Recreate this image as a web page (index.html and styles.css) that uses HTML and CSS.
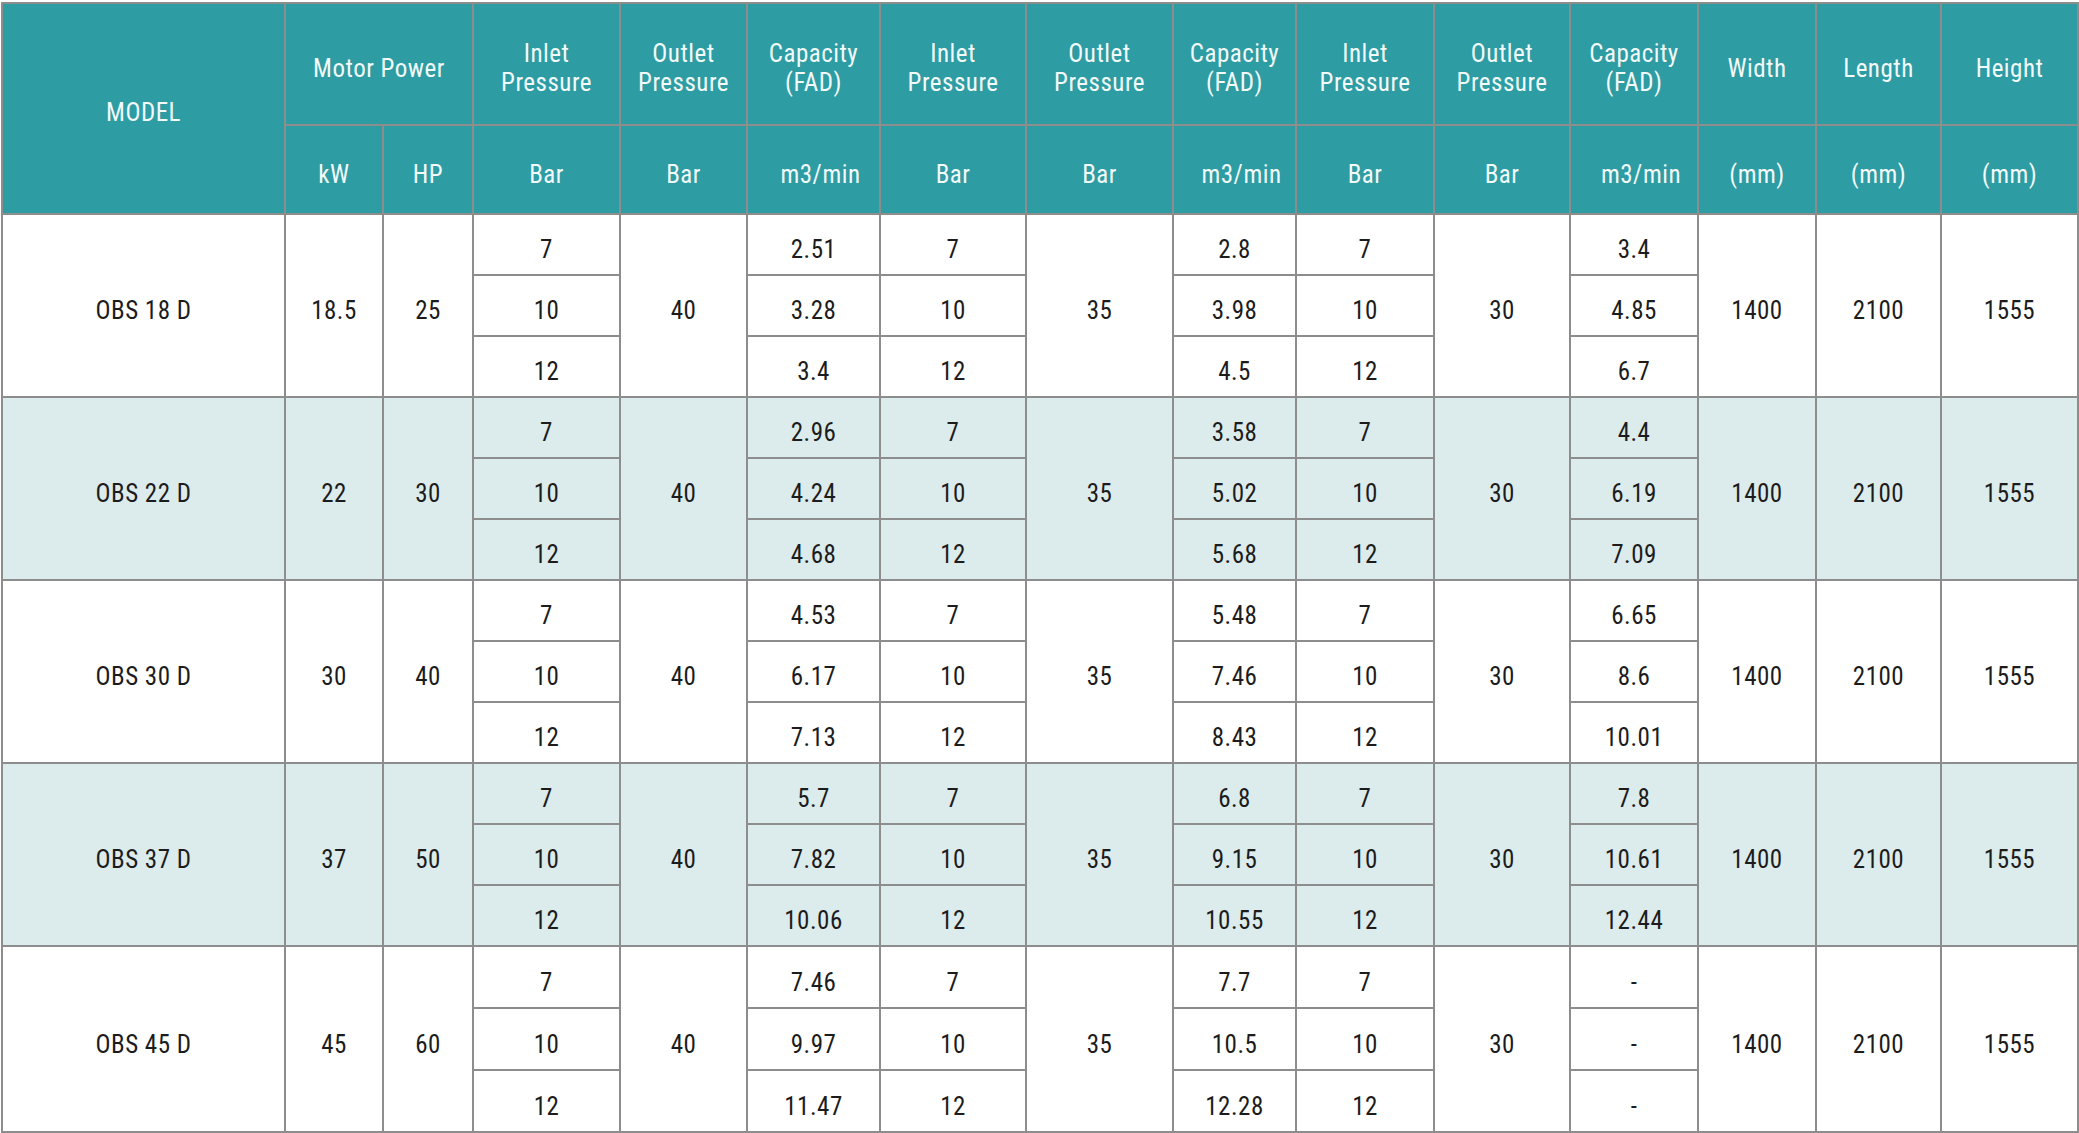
FILE: index.html
```html
<!DOCTYPE html>
<html lang="en">
<head>
<meta charset="utf-8">
<title>OBS D Series</title>
<link rel="stylesheet" href="styles.css">
</head>
<body>
<table class="spec">
  <colgroup>
    <col class="c-model"><col class="c-kw"><col class="c-hp">
    <col class="c-in1"><col class="c-out1"><col class="c-cap1">
    <col class="c-in2"><col class="c-out2"><col class="c-cap2">
    <col class="c-in3"><col class="c-out3"><col class="c-cap3">
    <col class="c-w"><col class="c-l"><col class="c-h">
  </colgroup>
  <thead>
    <tr class="h1">
      <th rowspan="2" class="model-h">MODEL</th>
      <th colspan="2">Motor Power</th>
      <th>Inlet<br>Pressure</th>
      <th>Outlet<br>Pressure</th>
      <th>Capacity<br>(FAD)</th>
      <th>Inlet<br>Pressure</th>
      <th>Outlet<br>Pressure</th>
      <th>Capacity<br>(FAD)</th>
      <th>Inlet<br>Pressure</th>
      <th>Outlet<br>Pressure</th>
      <th>Capacity<br>(FAD)</th>
      <th>Width</th>
      <th>Length</th>
      <th>Height</th>
    </tr>
    <tr class="h2">
      <th>kW</th><th>HP</th>
      <th>Bar</th><th>Bar</th><th class="unit">m3/min</th>
      <th>Bar</th><th>Bar</th><th class="unit">m3/min</th>
      <th>Bar</th><th>Bar</th><th class="unit">m3/min</th>
      <th>(mm)</th><th>(mm)</th><th>(mm)</th>
    </tr>
  </thead>

  <tbody class="grp">
    <tr>
      <td rowspan="3">OBS 18 D</td><td rowspan="3">18.5</td><td rowspan="3">25</td>
      <td>7</td><td rowspan="3">40</td><td>2.51</td>
      <td>7</td><td rowspan="3">35</td><td>2.8</td>
      <td>7</td><td rowspan="3">30</td><td>3.4</td>
      <td rowspan="3">1400</td><td rowspan="3">2100</td><td rowspan="3">1555</td>
    </tr>
    <tr><td>10</td><td>3.28</td><td>10</td><td>3.98</td><td>10</td><td>4.85</td></tr>
    <tr><td>12</td><td>3.4</td><td>12</td><td>4.5</td><td>12</td><td>6.7</td></tr>
  </tbody>

  <tbody class="grp alt">
    <tr>
      <td rowspan="3">OBS 22 D</td><td rowspan="3">22</td><td rowspan="3">30</td>
      <td>7</td><td rowspan="3">40</td><td>2.96</td>
      <td>7</td><td rowspan="3">35</td><td>3.58</td>
      <td>7</td><td rowspan="3">30</td><td>4.4</td>
      <td rowspan="3">1400</td><td rowspan="3">2100</td><td rowspan="3">1555</td>
    </tr>
    <tr><td>10</td><td>4.24</td><td>10</td><td>5.02</td><td>10</td><td>6.19</td></tr>
    <tr><td>12</td><td>4.68</td><td>12</td><td>5.68</td><td>12</td><td>7.09</td></tr>
  </tbody>

  <tbody class="grp">
    <tr>
      <td rowspan="3">OBS 30 D</td><td rowspan="3">30</td><td rowspan="3">40</td>
      <td>7</td><td rowspan="3">40</td><td>4.53</td>
      <td>7</td><td rowspan="3">35</td><td>5.48</td>
      <td>7</td><td rowspan="3">30</td><td>6.65</td>
      <td rowspan="3">1400</td><td rowspan="3">2100</td><td rowspan="3">1555</td>
    </tr>
    <tr><td>10</td><td>6.17</td><td>10</td><td>7.46</td><td>10</td><td>8.6</td></tr>
    <tr><td>12</td><td>7.13</td><td>12</td><td>8.43</td><td>12</td><td>10.01</td></tr>
  </tbody>

  <tbody class="grp alt">
    <tr>
      <td rowspan="3">OBS 37 D</td><td rowspan="3">37</td><td rowspan="3">50</td>
      <td>7</td><td rowspan="3">40</td><td>5.7</td>
      <td>7</td><td rowspan="3">35</td><td>6.8</td>
      <td>7</td><td rowspan="3">30</td><td>7.8</td>
      <td rowspan="3">1400</td><td rowspan="3">2100</td><td rowspan="3">1555</td>
    </tr>
    <tr><td>10</td><td>7.82</td><td>10</td><td>9.15</td><td>10</td><td>10.61</td></tr>
    <tr><td>12</td><td>10.06</td><td>12</td><td>10.55</td><td>12</td><td>12.44</td></tr>
  </tbody>

  <tbody class="grp last">
    <tr>
      <td rowspan="3">OBS 45 D</td><td rowspan="3">45</td><td rowspan="3">60</td>
      <td>7</td><td rowspan="3">40</td><td>7.46</td>
      <td>7</td><td rowspan="3">35</td><td>7.7</td>
      <td>7</td><td rowspan="3">30</td><td>-</td>
      <td rowspan="3">1400</td><td rowspan="3">2100</td><td rowspan="3">1555</td>
    </tr>
    <tr><td>10</td><td>9.97</td><td>10</td><td>10.5</td><td>10</td><td>-</td></tr>
    <tr><td>12</td><td>11.47</td><td>12</td><td>12.28</td><td>12</td><td>-</td></tr>
  </tbody>
</table>
</body>
</html>
```
FILE: styles.css
```css
html, body {
  margin: 0;
  padding: 0;
  background: #ffffff;
}

body {
  padding: 2px 0 0 1px;
}

.spec {
  border-collapse: collapse;
  table-layout: fixed;
  width: 2076px;
  font-family: "Roboto", "DejaVu Sans Condensed", sans-serif;
  font-stretch: condensed;
  font-size: 25px;
  letter-spacing: 0.5px;
  line-height: 29px;
  color: #1c1c1c;
}

.c-model { width: 283px; }
.c-kw { width: 98px; }
.c-hp { width: 90px; }
.c-in1 { width: 147px; }
.c-out1 { width: 127px; }
.c-cap1 { width: 133px; }
.c-in2 { width: 146px; }
.c-out2 { width: 147px; }
.c-cap2 { width: 123px; }
.c-in3 { width: 138px; }
.c-out3 { width: 136px; }
.c-cap3 { width: 128px; }
.c-w { width: 118px; }
.c-l { width: 125px; }
.c-h { width: 137px; }

.spec th,
.spec td {
  border: 2px solid #8d8d8d;
  text-align: center;
  vertical-align: middle;
  padding: 10px 0 0 0;
  font-weight: 400;
}

.spec th {
  background: #2d9ca3;
  color: #f2fafa;
}

.spec .h1 { height: 122px; }
.spec .h2 { height: 89px; }
.spec .h1 th { padding-top: 8px; }

.spec th.unit { padding-left: 14px; }

.spec tbody tr { height: 61px; }
.spec tbody.last tr { height: 62px; }

.spec tbody.alt td {
  background: #dcebec;
}
```
